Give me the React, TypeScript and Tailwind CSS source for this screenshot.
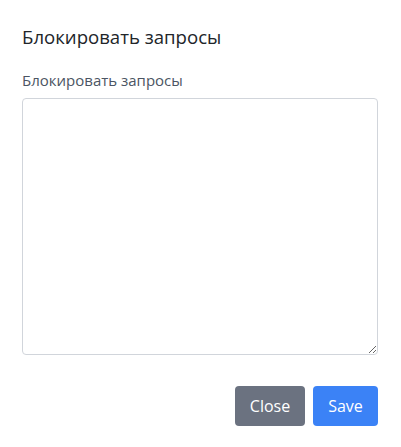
export default function App() {
  return (
    <div className="w-[401px] h-[447px] bg-white font-['Open_Sans',sans-serif]">
      <div className="pl-[22px] pr-[23px] pt-[25px]">
        <h5 className="text-[18.6px] leading-[24px] text-[#212529]">Блокировать запросы</h5>
        <div className="mt-[21px]">
          <label className="block text-[15px] leading-[20px] text-[#4b5563]">Блокировать запросы</label>
          <textarea className="mt-[8px] block w-full h-[257px] rounded-[4px] border border-[#d1d5db] outline-none resize-y" />
        </div>
        <div className="mt-[31px] flex justify-end gap-[8px]">
          <button className="h-[40px] w-[70px] rounded-[4px] bg-[#6b7280] text-white text-[16px]">Close</button>
          <button className="h-[40px] w-[65px] rounded-[4px] bg-[#3b82f6] text-white text-[16px]">Save</button>
        </div>
      </div>
    </div>
  )
}
